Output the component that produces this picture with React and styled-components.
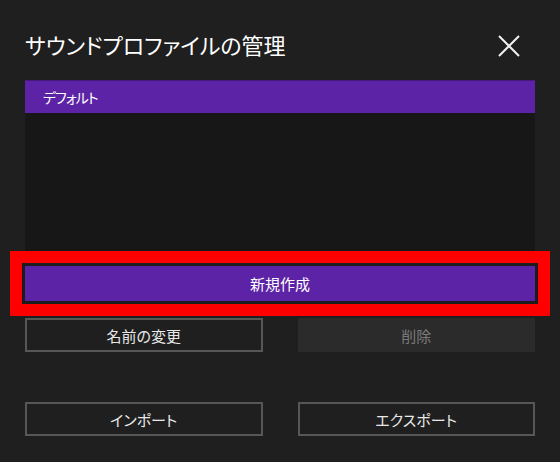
import styled, { createGlobalStyle } from "styled-components";

const GlobalStyle = createGlobalStyle`
  html, body {
    margin: 0;
    padding: 0;
    background: #1f1f1f;
  }
  body {
    font-family: "Noto Sans CJK JP", "Noto Sans", sans-serif;
    font-feature-settings: "palt";
  }
`;

const Dialog = styled.div`
  width: 560px;
  height: 462px;
  box-sizing: border-box;
  padding: 0 25px;
  background: #1f1f1f;
  color: #f2f2f2;
  overflow: hidden;
`;

const Header = styled.header`
  display: flex;
  align-items: center;
  justify-content: space-between;
  height: 72px;
  padding-top: 8px;
`;

const Title = styled.h1`
  margin: 0;
  font-size: 22px;
  font-weight: 400;
  line-height: 1;
  color: #ffffff;
`;

const CloseButton = styled.button`
  display: flex;
  align-items: center;
  justify-content: center;
  width: 22px;
  height: 22px;
  margin: 4px 15px 0 0;
  padding: 0;
  border: none;
  background: transparent;
  color: #f0f0f0;
  cursor: pointer;
`;

const ProfileList = styled.div`
  display: flex;
  flex-direction: column;
  height: 175px;
  background: #171717;
`;

const ProfileItem = styled.div`
  display: flex;
  align-items: center;
  height: 33px;
  box-sizing: border-box;
  padding: 0 18px;
  font-size: 14px;
  letter-spacing: -1px;
  color: #ffffff;
  background: ${(p) => (p.$selected ? "#5c23a6" : "transparent")};
  border-top: 1px solid ${(p) => (p.$selected ? "#45197e" : "transparent")};
`;

const PrimaryButton = styled.button`
  display: block;
  width: 100%;
  height: 35px;
  margin-top: 11px;
  border: none;
  background: #5c23a6;
  color: #ffffff;
  font-family: inherit;
  font-feature-settings: "palt";
  font-size: 15px;
  box-shadow: 0 0 0 3px #1c1c1c, 0 0 0 15px #ff0000;
  cursor: pointer;
`;

const ButtonRow = styled.div`
  display: grid;
  grid-template-columns: 1fr 1fr;
  column-gap: 35px;
  margin-top: ${(p) => p.$gap}px;
`;

const Button = styled.button`
  height: 34px;
  box-sizing: border-box;
  border: 2px solid ${(p) => (p.disabled ? "#2b2b2b" : "#575757")};
  background: ${(p) => (p.disabled ? "#2b2b2b" : "transparent")};
  color: ${(p) => (p.disabled ? "#7a7a7a" : "#e8e8e8")};
  font-family: inherit;
  font-feature-settings: "palt";
  font-size: 15px;
  cursor: ${(p) => (p.disabled ? "default" : "pointer")};
`;

const CloseIcon = () => (
  <svg width="22" height="22" viewBox="0 0 22 22" fill="none">
    <path d="M1 1 L21 21 M21 1 L1 21" stroke="currentColor" strokeWidth="2" />
  </svg>
);

const profiles = [{ name: "デフォルト", selected: true }];

export default function App() {
  return (
    <>
      <GlobalStyle />
      <Dialog>
        <Header>
          <Title>サウンドプロファイルの管理</Title>
          <CloseButton aria-label="閉じる">
            <CloseIcon />
          </CloseButton>
        </Header>

        <ProfileList>
          {profiles.map((p) => (
            <ProfileItem key={p.name} $selected={p.selected}>
              {p.name}
            </ProfileItem>
          ))}
        </ProfileList>

        <PrimaryButton>新規作成</PrimaryButton>

        <ButtonRow $gap={17}>
          <Button>名前の変更</Button>
          <Button disabled>削除</Button>
        </ButtonRow>

        <ButtonRow $gap={50}>
          <Button>インポート</Button>
          <Button>エクスポート</Button>
        </ButtonRow>
      </Dialog>
    </>
  );
}
